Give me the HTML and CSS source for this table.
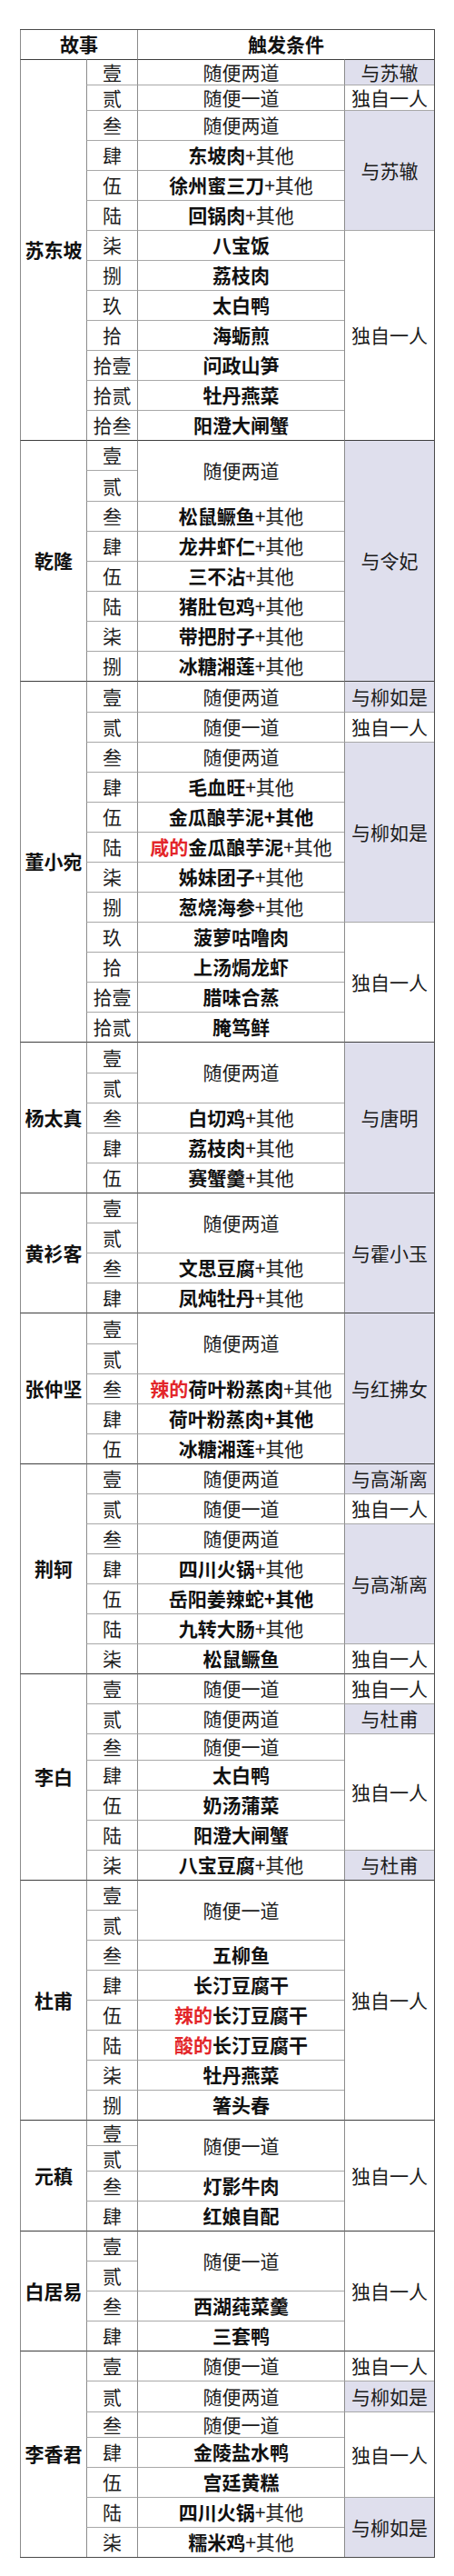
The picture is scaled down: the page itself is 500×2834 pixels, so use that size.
FILE: index.html
```html
<!DOCTYPE html>
<html lang="zh-CN">
<head>
<meta charset="utf-8">
<title>故事触发条件</title>
<link rel="stylesheet" href="styles.css">
</head>
<body>
<table class="tbl">
<colgroup><col class="c1"><col class="c2"><col class="c3"><col class="c4"></colgroup>
<thead>
<tr class="head"><th colspan="2">故事</th><th colspan="2">触发条件</th></tr>
</thead>
<tbody>
<!-- 苏东坡 -->
<tr class="sec short"><td class="name" rowspan="13">苏东坡</td><td>壹</td><td>随便两道</td><td class="lav">与苏辙</td></tr>
<tr class="short"><td>贰</td><td>随便一道</td><td>独自一人</td></tr>
<tr><td>叁</td><td>随便两道</td><td class="lav" rowspan="4">与苏辙</td></tr>
<tr><td>肆</td><td><b>东坡肉</b>+其他</td></tr>
<tr><td>伍</td><td><b>徐州蜜三刀</b>+其他</td></tr>
<tr><td>陆</td><td><b>回锅肉</b>+其他</td></tr>
<tr><td>柒</td><td><b>八宝饭</b></td><td rowspan="7">独自一人</td></tr>
<tr><td>捌</td><td><b>荔枝肉</b></td></tr>
<tr><td>玖</td><td><b>太白鸭</b></td></tr>
<tr><td>拾</td><td><b>海蛎煎</b></td></tr>
<tr><td>拾壹</td><td><b>问政山笋</b></td></tr>
<tr><td>拾贰</td><td><b>牡丹燕菜</b></td></tr>
<tr><td>拾叁</td><td><b>阳澄大闸蟹</b></td></tr>
<!-- 乾隆 -->
<tr class="sec"><td class="name" rowspan="8">乾隆</td><td>壹</td><td rowspan="2">随便两道</td><td class="lav" rowspan="8">与令妃</td></tr>
<tr class="tall"><td>贰</td></tr>
<tr><td>叁</td><td><b>松鼠鳜鱼</b>+其他</td></tr>
<tr><td>肆</td><td><b>龙井虾仁</b>+其他</td></tr>
<tr><td>伍</td><td><b>三不沾</b>+其他</td></tr>
<tr><td>陆</td><td><b>猪肚包鸡</b>+其他</td></tr>
<tr><td>柒</td><td><b>带把肘子</b>+其他</td></tr>
<tr><td>捌</td><td><b>冰糖湘莲</b>+其他</td></tr>
<!-- 董小宛 -->
<tr class="sec tall"><td class="name" rowspan="12">董小宛</td><td>壹</td><td>随便两道</td><td class="lav">与柳如是</td></tr>
<tr><td>贰</td><td>随便一道</td><td>独自一人</td></tr>
<tr><td>叁</td><td>随便两道</td><td class="lav" rowspan="6">与柳如是</td></tr>
<tr><td>肆</td><td><b>毛血旺</b>+其他</td></tr>
<tr><td>伍</td><td><b>金瓜酿芋泥+其他</b></td></tr>
<tr><td>陆</td><td><b class="red">咸的</b><b>金瓜酿芋泥</b>+其他</td></tr>
<tr><td>柒</td><td><b>姊妹团子</b>+其他</td></tr>
<tr><td>捌</td><td><b>葱烧海参</b>+其他</td></tr>
<tr><td>玖</td><td><b>菠萝咕噜肉</b></td><td rowspan="4">独自一人</td></tr>
<tr><td>拾</td><td><b>上汤焗龙虾</b></td></tr>
<tr><td>拾壹</td><td><b>腊味合蒸</b></td></tr>
<tr><td>拾贰</td><td><b>腌笃鲜</b></td></tr>
<!-- 杨太真 -->
<tr class="sec tall"><td class="name" rowspan="5">杨太真</td><td>壹</td><td rowspan="2">随便两道</td><td class="lav" rowspan="5">与唐明</td></tr>
<tr><td>贰</td></tr>
<tr><td>叁</td><td><b>白切鸡</b>+其他</td></tr>
<tr><td>肆</td><td><b>荔枝肉</b>+其他</td></tr>
<tr><td>伍</td><td><b>赛蟹羹</b>+其他</td></tr>
<!-- 黄衫客 -->
<tr class="sec"><td class="name" rowspan="4">黄衫客</td><td>壹</td><td rowspan="2">随便两道</td><td class="lav" rowspan="4">与霍小玉</td></tr>
<tr><td>贰</td></tr>
<tr><td>叁</td><td><b>文思豆腐</b>+其他</td></tr>
<tr><td>肆</td><td><b>凤炖牡丹</b>+其他</td></tr>
<!-- 张仲坚 -->
<tr class="sec tall"><td class="name" rowspan="5">张仲坚</td><td>壹</td><td rowspan="2">随便两道</td><td class="lav" rowspan="5">与红拂女</td></tr>
<tr><td>贰</td></tr>
<tr><td>叁</td><td><b class="red">辣的</b><b>荷叶粉蒸肉</b>+其他</td></tr>
<tr><td>肆</td><td><b>荷叶粉蒸肉+其他</b></td></tr>
<tr><td>伍</td><td><b>冰糖湘莲</b>+其他</td></tr>
<!-- 荆轲 -->
<tr class="sec"><td class="name" rowspan="7">荆轲</td><td>壹</td><td>随便两道</td><td class="lav">与高渐离</td></tr>
<tr><td>贰</td><td>随便一道</td><td>独自一人</td></tr>
<tr><td>叁</td><td>随便两道</td><td class="lav" rowspan="4">与高渐离</td></tr>
<tr><td>肆</td><td><b>四川火锅</b>+其他</td></tr>
<tr><td>伍</td><td><b>岳阳姜辣蛇+其他</b></td></tr>
<tr><td>陆</td><td><b>九转大肠</b>+其他</td></tr>
<tr><td>柒</td><td><b>松鼠鳜鱼</b></td><td>独自一人</td></tr>
<!-- 李白 -->
<tr class="sec"><td class="name" rowspan="7">李白</td><td>壹</td><td>随便一道</td><td>独自一人</td></tr>
<tr><td>贰</td><td>随便两道</td><td class="lav">与杜甫</td></tr>
<tr class="mid"><td>叁</td><td>随便一道</td><td rowspan="4">独自一人</td></tr>
<tr><td>肆</td><td><b>太白鸭</b></td></tr>
<tr><td>伍</td><td><b>奶汤蒲菜</b></td></tr>
<tr><td>陆</td><td><b>阳澄大闸蟹</b></td></tr>
<tr><td>柒</td><td><b>八宝豆腐</b>+其他</td><td class="lav">与杜甫</td></tr>
<!-- 杜甫 -->
<tr class="sec"><td class="name" rowspan="8">杜甫</td><td>壹</td><td rowspan="2">随便一道</td><td rowspan="8">独自一人</td></tr>
<tr><td>贰</td></tr>
<tr><td>叁</td><td><b>五柳鱼</b></td></tr>
<tr><td>肆</td><td><b>长汀豆腐干</b></td></tr>
<tr><td>伍</td><td><b class="red">辣的</b><b>长汀豆腐干</b></td></tr>
<tr><td>陆</td><td><b class="red">酸的</b><b>长汀豆腐干</b></td></tr>
<tr><td>柒</td><td><b>牡丹燕菜</b></td></tr>
<tr><td>捌</td><td><b>箸头春</b></td></tr>
<!-- 元稹 -->
<tr class="sec short"><td class="name" rowspan="4">元稹</td><td>壹</td><td rowspan="2">随便一道</td><td rowspan="4">独自一人</td></tr>
<tr class="short"><td>贰</td></tr>
<tr><td>叁</td><td><b>灯影牛肉</b></td></tr>
<tr><td>肆</td><td><b>红娘自配</b></td></tr>
<!-- 白居易 -->
<tr class="sec"><td class="name" rowspan="4">白居易</td><td>壹</td><td rowspan="2">随便一道</td><td rowspan="4">独自一人</td></tr>
<tr><td>贰</td></tr>
<tr><td>叁</td><td><b>西湖莼菜羹</b></td></tr>
<tr><td>肆</td><td><b>三套鸭</b></td></tr>
<!-- 李香君 -->
<tr class="sec"><td class="name" rowspan="7">李香君</td><td>壹</td><td>随便一道</td><td>独自一人</td></tr>
<tr class="tall"><td>贰</td><td>随便两道</td><td class="lav">与柳如是</td></tr>
<tr class="short"><td>叁</td><td>随便一道</td><td rowspan="3">独自一人</td></tr>
<tr><td>肆</td><td><b>金陵盐水鸭</b></td></tr>
<tr><td>伍</td><td><b>宫廷黄糕</b></td></tr>
<tr><td>陆</td><td><b>四川火锅</b>+其他</td><td class="lav" rowspan="2">与柳如是</td></tr>
<tr><td>柒</td><td><b>糯米鸡</b>+其他</td></tr>
</tbody>
</table>
</body>
</html>
```

FILE: styles.css
```css
html, body {
  margin: 0;
  padding: 0;
  background: #ffffff;
}

body {
  font-family: "Noto Sans CJK SC", "Noto Sans", sans-serif;
  color: #1c1c1c;
}

.tbl {
  margin: 32px 0 0 22px;
  border-collapse: separate;
  border-spacing: 0;
  table-layout: fixed;
  width: 457px;
  border-top: 1px solid #4a4a4a;
  border-right: 1px solid #4a4a4a;
  border-bottom: 1px solid #4a4a4a;
  font-size: 21px;
  line-height: 1.2;
}

.c1 { width: 73px; }
.c2 { width: 56px; }
.c3 { width: 228px; }
.c4 { width: 99px; }

.head {
  height: 32px;
}

.head th {
  font-weight: 700;
  color: #111111;
  border-left: 1px solid #8a8a8a;
  padding: 0;
  text-align: center;
  vertical-align: middle;
}

tbody tr {
  height: 33px;
}

tbody tr.short {
  height: 28px;
}

tbody tr.mid {
  height: 29px;
}

tbody tr.tall {
  height: 34px;
}

td {
  padding: 0;
  text-align: center;
  vertical-align: middle;
  white-space: nowrap;
  border-top: 1px solid #a8a8a8;
  border-left: 1px solid #8c8c8c;
}

.sec > td {
  border-top-color: #3e3e3e;
}

td.name {
  font-weight: 700;
  color: #111111;
}

td.lav {
  background: #dfdfed;
}

td b {
  font-weight: 700;
  color: #111111;
}

td b.red {
  color: #e3262a;
}
```
